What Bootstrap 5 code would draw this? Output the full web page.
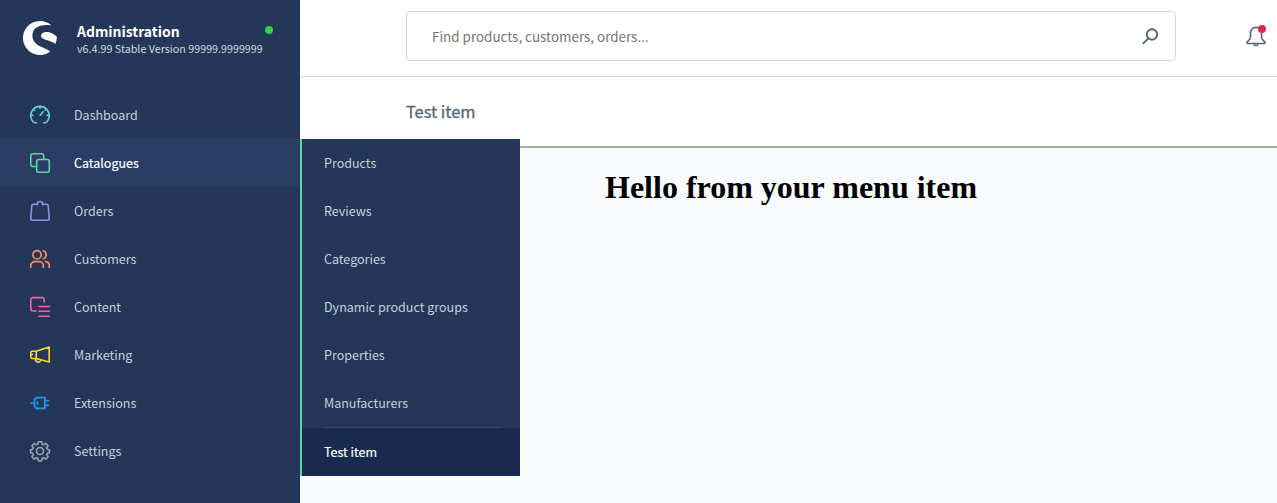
<!DOCTYPE html>
<html lang="en">
<head>
<meta charset="utf-8">
<meta name="viewport" content="width=device-width, initial-scale=1">
<title>Administration</title>
<link rel="stylesheet" href="https://cdn.jsdelivr.net/npm/bootstrap@5.3.0/dist/css/bootstrap.min.css">
<style>
body{font-family:"Noto Sans CJK SC","Source Sans Pro",sans-serif;background:#f9fafc;color:#52667a;height:503px;overflow:hidden}
.admin-menu{width:300px;background:#243758}
.brand-row{height:91px;padding:21px 27px 0 23px}
.brand-text{margin-left:20px}
.brand-name{font-size:13.95px;line-height:20px;font-weight:700;color:#fff}
.brand-version{font-size:10.74px;line-height:15px;color:#d1d9e0;white-space:nowrap}
.status-dot{width:8px;height:8px;background:#37d046;margin-top:5px;margin-left:2px}
.menu-entry{height:48px;padding-left:30px;gap:24px;font-size:12.53px;line-height:20px;color:#c3cfdc;text-decoration:none;white-space:nowrap}
.menu-entry svg{width:20px;height:20px;flex:none;overflow:visible}
.menu-entry.current{background:#2a3e65;color:#fff}
.menu-entry.current span{-webkit-text-stroke:.15px #fff}
.flyout{left:300px;top:139px;width:220px;border-left:2px solid #5ad6a0;background:#243758}
.flyout .menu-entry{padding-left:22px}
.flyout .chosen{background:#182a4e;color:#fff}
.flyout .rule{height:1px;margin:0 20px;background:#34496a}
.topbar{height:77px;border-bottom:1px solid #d1d9e0;padding:11px 11px 0 106px;background:#fff}
.search-box{width:770px;height:50px;border:1px solid #d1d9e0;border-radius:4px;padding:0 16px 0 25px;font-size:13.42px;color:#757575}
.bell{margin-top:15px}
.page-head{height:71px;border-bottom:2px solid #9db59a;padding:22px 0 0 106px;background:#fff}
.page-head h2{font-size:16.4px;line-height:24px;font-weight:400;margin:0;-webkit-text-stroke:.3px #52667a}
.hello{font:700 32px/37px "Liberation Serif",serif;color:#000;margin:21px 0 0 305px}
</style>
<script src="https://cdn.jsdelivr.net/npm/bootstrap@5.3.0/dist/js/bootstrap.bundle.min.js"></script>
</head>
<body>
<div class="d-flex h-100 position-relative">
<aside class="admin-menu flex-shrink-0 h-100">
<header class="brand-row d-flex align-items-start">
<svg width="34" height="34" viewBox="0 0 34 34" fill="#fff"><path d="M28.600 4.400C25.500 1.600 21.500 0 17 0a17 17 0 1 0 10.300 30.500C25 28.500 21.500 27.300 17.500 25.500 13 23.400 9.400 20.200 9.400 14.500 9.400 8.500 13.500 4.800 21 4.200c3-.2 5.600 0 7.600.2z"/><path d="M33.900 15.800C32 13.700 28 10.900 23.600 10.900c-3.400 0-5.600 1.500-5.600 3.600 0 2.700 3 3.700 6.500 4.800 3 1 6 2.200 7.900 3.600A17 17 0 0 0 33.900 15.800z"/></svg>
<div class="brand-text flex-grow-1"><div class="brand-name d-flex justify-content-between"><span>Administration</span><i class="status-dot rounded-circle"></i></div><div class="brand-version">v6.4.99 Stable Version 99999.9999999</div></div>
</header>
<nav class="d-flex flex-column">
<a class="menu-entry d-flex align-items-center" href="#"><svg viewBox="0 0 20 20" fill="none" stroke="#67cbe4" stroke-width="1.600" stroke-linecap="round"><path d="M6.500 17.800H4.300A9.200 9.200 0 1 1 15.700 17.800H13.500M10 1.200v2M3.800 4.200l1 1M16.200 4.200l-1 1M1.200 10.300h1.800M17 10.300h1.800M10.200 10.300l3-3.500"/></svg><span>Dashboard</span></a>
<a class="menu-entry current d-flex align-items-center" href="#"><svg viewBox="0 0 20 20" fill="none" stroke="#5ad6a0" stroke-width="1.600"><path d="M6.500 13.500H3a2.200 2.200 0 0 1-2.200-2.200V3A2.200 2.200 0 0 1 3 .8h8.500A2.200 2.200 0 0 1 13.700 3v3.500"/><rect x="6.700" y="6.500" width="12.600" height="12.700" rx="2"/></svg><span>Catalogues</span></a>
<a class="menu-entry d-flex align-items-center" href="#"><svg viewBox="0 0 20 20" fill="none" stroke="#9a8ce8" stroke-width="1.600" stroke-linecap="round"><path d="M5 3.300H3.300a1.500 1.500 0 0 0-1.500 1.400L.8 17.600a1.500 1.500 0 0 0 1.500 1.600h15.400a1.500 1.500 0 0 0 1.500-1.600l-1-12.900a1.500 1.500 0 0 0-1.500-1.400H15M7.300 4V2.800c0-3 5.400-3 5.400 0V4M7.300 3.300H5M12.700 3.300H15"/></svg><span>Orders</span></a>
<a class="menu-entry d-flex align-items-center" href="#"><svg viewBox="0 0 20 20" fill="none" stroke="#f88962" stroke-width="1.700" stroke-linecap="round"><circle cx="7" cy="5.800" r="4.200"/><path d="M.8 18.200v-1.500a4 4 0 0 1 4-4h4.500a4 4 0 0 1 4 4v1.500M13.300 1.800a4.200 4.200 0 0 1 0 8M15.500 12.700a4 4 0 0 1 3.700 4v1.500"/></svg><span>Customers</span></a>
<a class="menu-entry d-flex align-items-center" href="#"><svg viewBox="0 0 20 20" fill="none" stroke="#f95eae" stroke-width="1.600" stroke-linecap="round"><path d="M6 14H2.800a2 2 0 0 1-2-2V2.600a2 2 0 0 1 2-2h9.400a2 2 0 0 1 2 2V5M9 9.500h10.300M9 14.300h10.300M9 19.200h10.300"/></svg><span>Content</span></a>
<a class="menu-entry d-flex align-items-center" href="#"><svg viewBox="0 0 20 20" fill="none" stroke="#fbd928" stroke-width="1.600" stroke-linejoin="round"><path d="M6.200 6.200 19.200 2v15L6.200 13.500H2.300A1.500 1.500 0 0 1 .8 12V7.700a1.500 1.500 0 0 1 1.500-1.500zM6.200 6.200v7.300M.8 9.500h2.300M5.500 13.500v.8a2.700 2.700 0 0 0 5.300.8"/></svg><span>Marketing</span></a>
<a class="menu-entry d-flex align-items-center" href="#"><svg viewBox="0 0 20 20" fill="none" stroke="#2196f3" stroke-width="1.700" stroke-linecap="round"><path d="M.8 10h3.500M15 7.500h3.500M15 12.300h3.500M7.500 8.800v2.400M6.500 4.700h8.300v10.600H6.500l-2-2V6.700z"/></svg><span>Extensions</span></a>
<a class="menu-entry d-flex align-items-center" href="#"><svg viewBox="0 0 20 20" fill="none" stroke="#98a5af" stroke-width="1.600" stroke-linejoin="round"><circle cx="10" cy="10" r="3.500"/><path d="M8.300.8h3.400l.5 2.400 1.400.6 2.100-1.400 2.400 2.400-1.400 2.100.6 1.400 2.100.5v2.900l-2.100.5-.6 1.400 1.400 2.100-2.400 2.400-2.100-1.400-1.400.6-.5 2.400H8.300l-.5-2.400-1.400-.6-2.100 1.400-2.400-2.400 1.400-2.100-.6-1.400-2.100-.5V8.800l2.100-.5.6-1.400-1.400-2.100 2.400-2.400 2.100 1.400 1.400-.6z"/></svg><span>Settings</span></a>
</nav>
</aside>
<main class="flex-grow-1">
<div class="topbar d-flex justify-content-between align-items-start">
<div class="search-box d-flex align-items-center justify-content-between"><span>Find products, customers, orders...</span><svg width="17" height="17" viewBox="0 0 17 17" fill="none" stroke="#52667a" stroke-width="1.900" stroke-linecap="round"><circle cx="10" cy="6.500" r="5.200"/><path d="m6.300 10.300-5 5"/></svg></div>
<svg class="bell overflow-visible" width="20" height="21" viewBox="0 0 20 21" fill="none" stroke="#52667a" stroke-width="1.600"><path d="M10 1.400C6.500 1.400 4.500 3.800 4.500 7v4.500c0 2-2.200 3-3.200 4.300-.7 1-.2 1.700.8 1.700h15.800c1 0 1.500-.7.8-1.700-1-1.300-3.200-2.300-3.200-4.300V7c0-3.200-2-5.600-5.500-5.600zM8 18c.2 2.300 3.800 2.300 4 0"/><circle cx="16" cy="3" r="4" fill="#de294c" stroke="none"/></svg>
</div>
<div class="page-head"><h2>Test item</h2></div>
<h1 class="hello">Hello from your menu item</h1>
</main>
<nav class="flyout position-absolute">
<a class="menu-entry d-flex align-items-center" href="#"><span>Products</span></a>
<a class="menu-entry d-flex align-items-center" href="#"><span>Reviews</span></a>
<a class="menu-entry d-flex align-items-center" href="#"><span>Categories</span></a>
<a class="menu-entry d-flex align-items-center" href="#"><span>Dynamic product groups</span></a>
<a class="menu-entry d-flex align-items-center" href="#"><span>Properties</span></a>
<a class="menu-entry d-flex align-items-center" href="#"><span>Manufacturers</span></a>
<div class="rule"></div>
<a class="menu-entry current chosen d-flex align-items-center" href="#"><span>Test item</span></a>
</nav>
</div>
</body>
</html>
